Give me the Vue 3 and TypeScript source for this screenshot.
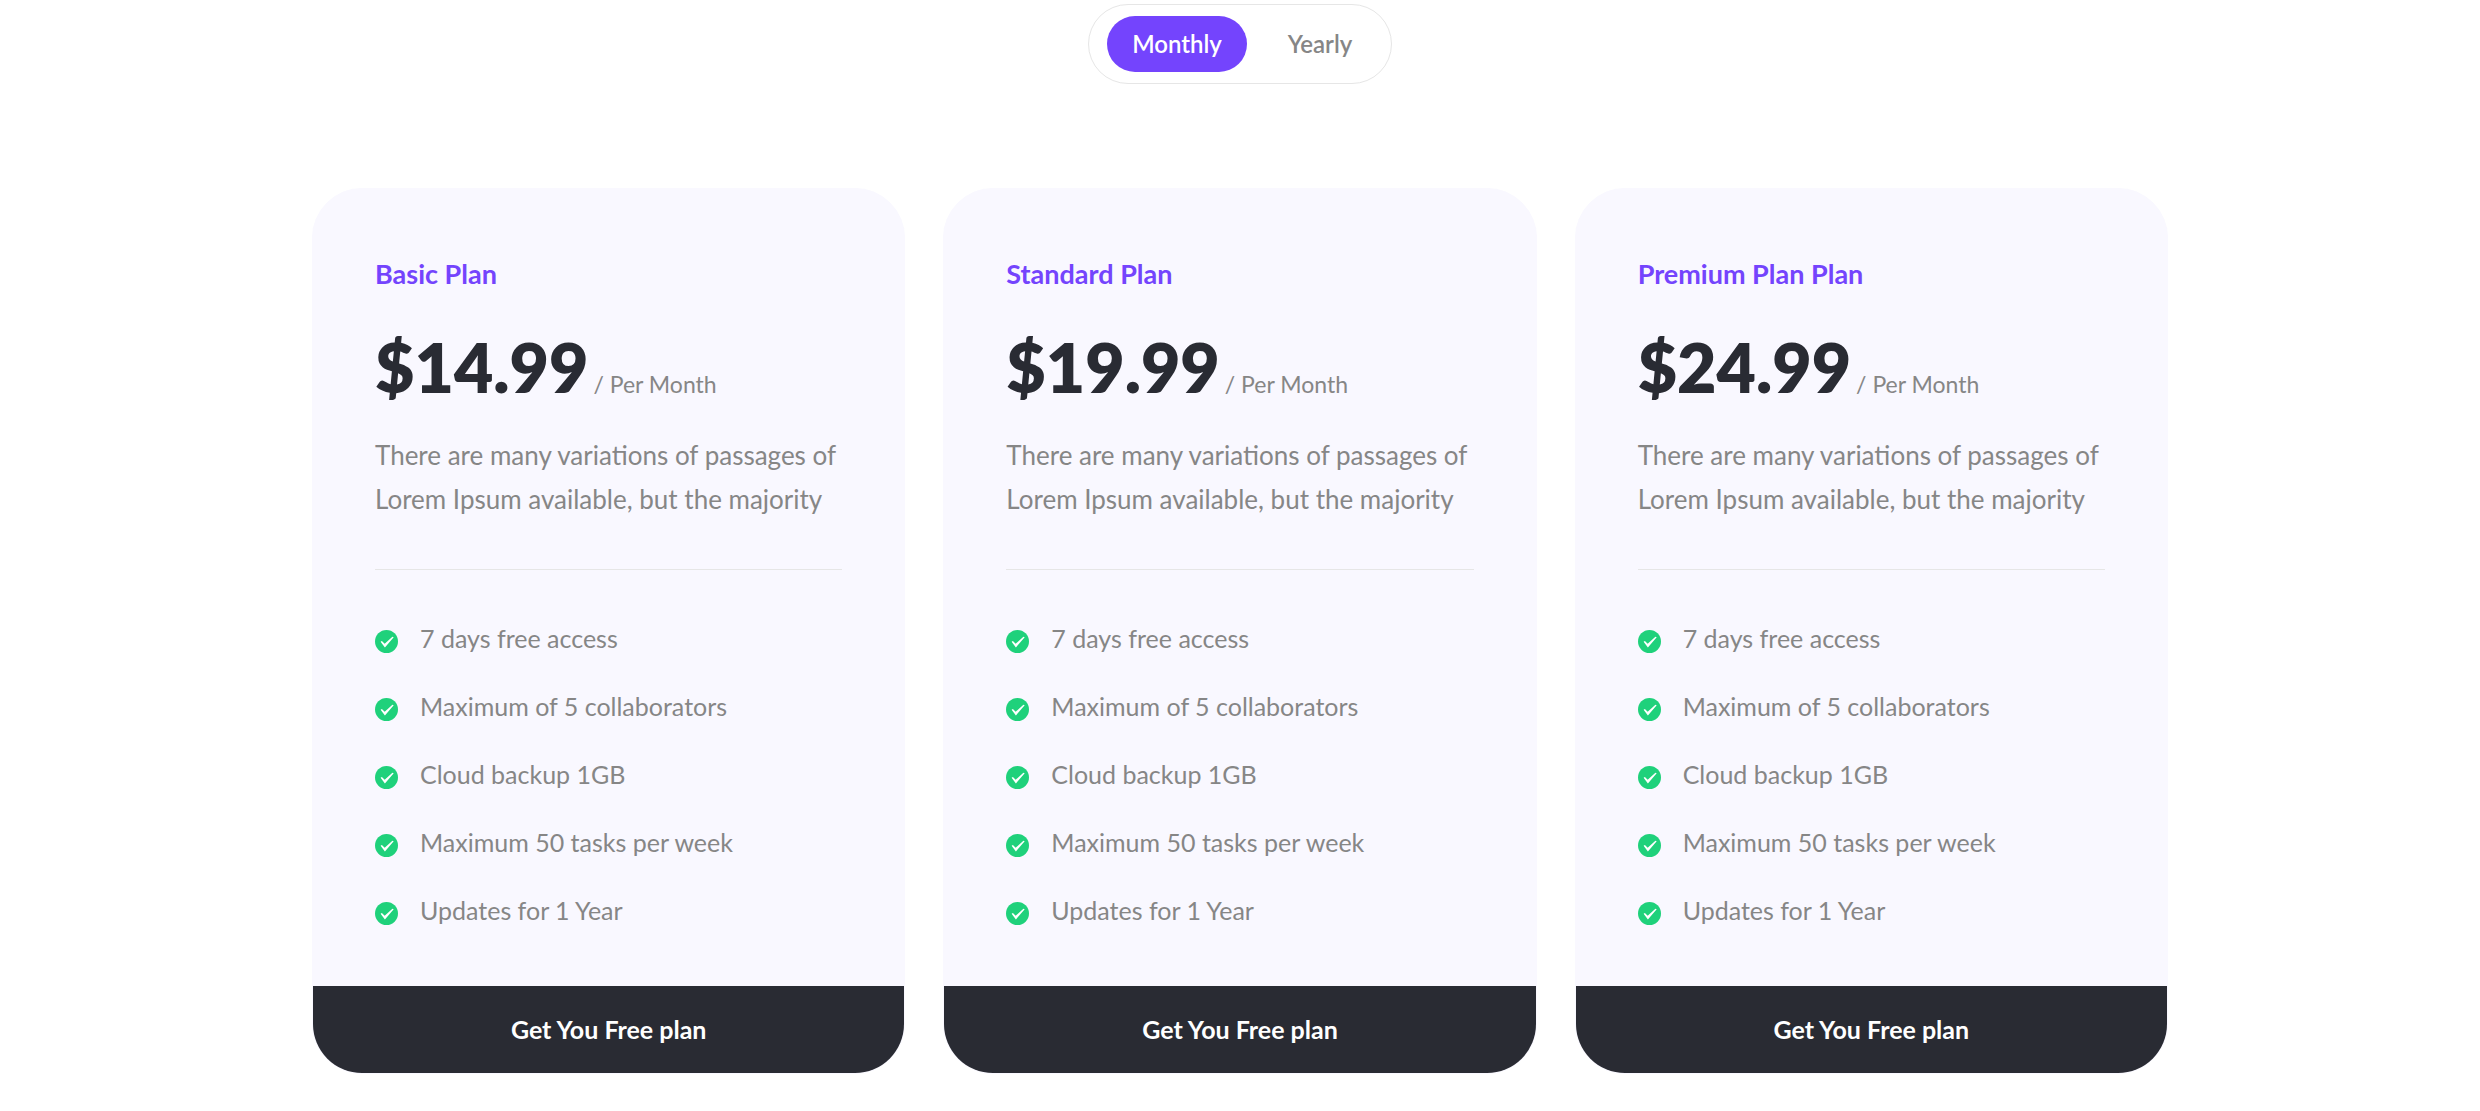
<script setup lang="ts">
import { computed, ref } from 'vue'

type Cycle = 'Monthly' | 'Yearly'

interface Plan {
  name: string
  monthly: string
  yearly: string
}

const cycles: Cycle[] = ['Monthly', 'Yearly']
const cycle = ref<Cycle>('Monthly')
const period = computed(() => (cycle.value === 'Monthly' ? 'Month' : 'Year'))

const plans: Plan[] = [
  { name: 'Basic Plan', monthly: '$14.99', yearly: '$149.99' },
  { name: 'Standard Plan', monthly: '$19.99', yearly: '$199.99' },
  { name: 'Premium Plan Plan', monthly: '$24.99', yearly: '$249.99' },
]

const features: string[] = [
  '7 days free access',
  'Maximum of 5 collaborators',
  'Cloud backup 1GB',
  'Maximum 50 tasks per week',
  'Updates for 1 Year',
]
</script>

<template>
  <main class="pricing">
    <div class="switch" role="group" aria-label="Billing cycle">
      <button
        v-for="option in cycles"
        :key="option"
        type="button"
        class="switch-option"
        :class="{ active: option === cycle }"
        :aria-pressed="option === cycle"
        @click="cycle = option"
      >
        {{ option }}
      </button>
    </div>

    <section class="plans">
      <article v-for="plan in plans" :key="plan.name" class="card">
        <div class="body">
          <h2 class="name">{{ plan.name }}</h2>
          <p class="price">
            <strong class="amount">{{ cycle === 'Monthly' ? plan.monthly : plan.yearly }}</strong>
            <span class="period">/ Per {{ period }}</span>
          </p>
          <p class="summary">
            There are many variations of passages of Lorem Ipsum available, but the majority
          </p>
          <ul class="features">
            <li v-for="feature in features" :key="feature" class="feature">
              <svg class="check" viewBox="0 0 23 23" aria-hidden="true">
                <circle cx="11.5" cy="11.5" r="11.5" fill="#1fd17b" />
                <path d="M5.6 11.8 6.9 10.9 9.7 13.7 17.4 6.7 18.7 7.2 9.9 17.4z" fill="#fff" />
              </svg>
              <span>{{ feature }}</span>
            </li>
          </ul>
        </div>
        <button type="button" class="cta">Get You Free plan</button>
      </article>
    </section>
  </main>
</template>

<style>
body {
  margin: 0;
  background: #fff;
}
</style>

<style scoped>
.pricing {
  box-sizing: border-box;
  display: flex;
  flex-direction: column;
  align-items: center;
  padding: 4px 40px 36px;
  font-family: Lato, 'Liberation Sans', sans-serif;
  font-size: 25px;
  color: #868686;
}

.pricing button {
  border: 0;
  font-family: inherit;
  cursor: pointer;
}

.switch {
  display: flex;
  gap: 13px;
  padding: 11px 11px 11px 18px;
  border: 1px solid #e6e6e6;
  border-radius: 40px;
}

.switch-option {
  min-width: 120px;
  height: 56px;
  padding: 0 24px 2px;
  border-radius: 28px;
  background: transparent;
  color: #868686;
  font-size: 24px;
  font-weight: 600;
}

.switch-option.active {
  min-width: 140px;
  background: #7444fd;
  color: #fff;
}

.plans {
  display: grid;
  grid-template-columns: repeat(3, 1fr);
  gap: 38px;
  width: 100%;
  max-width: 1856px;
  margin-top: 104px;
}

.card {
  display: flex;
  flex-direction: column;
  overflow: hidden;
  border: 1px solid #f9f8ff;
  border-radius: 50px;
  background: #f9f8ff;
}

.body {
  flex: 1;
  padding: 67px 62px 54px;
}

.name {
  margin: 0;
  color: #7444fd;
  font-size: 27px;
  font-weight: 700;
  line-height: 36px;
}

.price {
  display: flex;
  align-items: baseline;
  gap: 5px;
  margin: 29px 0 0;
}

.amount {
  color: #292b33;
  font-size: 68px;
  font-weight: 800;
  line-height: 92px;
}

.period {
  font-size: 23px;
  line-height: 36px;
}

.summary {
  margin: 20px 0 0;
  padding-bottom: 48px;
  border-bottom: 1px solid #e6e6e6;
  font-size: 26px;
  line-height: 44px;
}

.features {
  display: flex;
  flex-direction: column;
  gap: 24px;
  margin: 0;
  padding: 46px 0 0;
  list-style: none;
}

.feature {
  display: flex;
  align-items: center;
  gap: 22px;
  line-height: 44px;
}

.check {
  flex: none;
  width: 23px;
  height: 23px;
  margin-top: 6px;
}

.cta {
  height: 87px;
  padding: 0 24px 2px;
  background: #292b33;
  color: #fff;
  font-size: 25px;
  font-weight: 700;
}
</style>
